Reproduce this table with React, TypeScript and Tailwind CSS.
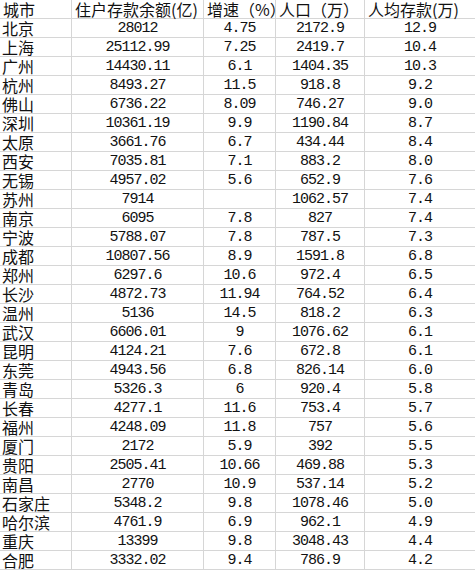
const rows: [string, string, string, string, string][] = [
  ['北京', '28012', '4.75', '2172.9', '12.9'],
  ['上海', '25112.99', '7.25', '2419.7', '10.4'],
  ['广州', '14430.11', '6.1', '1404.35', '10.3'],
  ['杭州', '8493.27', '11.5', '918.8', '9.2'],
  ['佛山', '6736.22', '8.09', '746.27', '9.0'],
  ['深圳', '10361.19', '9.9', '1190.84', '8.7'],
  ['太原', '3661.76', '6.7', '434.44', '8.4'],
  ['西安', '7035.81', '7.1', '883.2', '8.0'],
  ['无锡', '4957.02', '5.6', '652.9', '7.6'],
  ['苏州', '7914', '', '1062.57', '7.4'],
  ['南京', '6095', '7.8', '827', '7.4'],
  ['宁波', '5788.07', '7.8', '787.5', '7.3'],
  ['成都', '10807.56', '8.9', '1591.8', '6.8'],
  ['郑州', '6297.6', '10.6', '972.4', '6.5'],
  ['长沙', '4872.73', '11.94', '764.52', '6.4'],
  ['温州', '5136', '14.5', '818.2', '6.3'],
  ['武汉', '6606.01', '9', '1076.62', '6.1'],
  ['昆明', '4124.21', '7.6', '672.8', '6.1'],
  ['东莞', '4943.56', '6.8', '826.14', '6.0'],
  ['青岛', '5326.3', '6', '920.4', '5.8'],
  ['长春', '4277.1', '11.6', '753.4', '5.7'],
  ['福州', '4248.09', '11.8', '757', '5.6'],
  ['厦门', '2172', '5.9', '392', '5.5'],
  ['贵阳', '2505.41', '10.66', '469.88', '5.3'],
  ['南昌', '2770', '10.9', '537.14', '5.2'],
  ['石家庄', '5348.2', '9.8', '1078.46', '5.0'],
  ['哈尔滨', '4761.9', '6.9', '962.1', '4.9'],
  ['重庆', '13399', '9.8', '3048.43', '4.4'],
  ['合肥', '3332.02', '9.4', '786.9', '4.2'],
]

const headers = ['城市', '住户存款余额(亿)', '增速（%）', '人口（万）', '人均存款(万)']

const cjk = "font-['Noto_Sans_CJK_SC',sans-serif]"
const mono = "font-['Liberation_Mono',monospace] text-[15px] tracking-[-1px]"

export default function App() {
  return (
    <div className="h-[571px] w-[475px] overflow-hidden bg-white text-[#111]">
      <div className="grid grid-cols-[72px_132px_72px_89px_110px] auto-rows-[19px]">
        {headers.map((h, i) => (
          <div
            key={h}
            className={`flex h-[19px] items-center whitespace-nowrap border-b border-[#d6d6d6] pl-[3px] text-[16px] leading-none ${cjk} ${
              i < 4 ? 'border-r' : ''
            }`}
          >
            {h}
          </div>
        ))}
        {rows.map((r) =>
          r.map((v, i) => (
            <div
              key={r[0] + i}
              className={`flex h-[19px] items-center whitespace-nowrap border-b border-[#d6d6d6] leading-none ${
                i < 4 ? 'border-r' : ''
              } ${i === 0 ? `pl-[2px] text-[16px] ${cjk}` : `justify-center ${mono}`}`}
            >
              {v}
            </div>
          ))
        )}
      </div>
    </div>
  )
}
